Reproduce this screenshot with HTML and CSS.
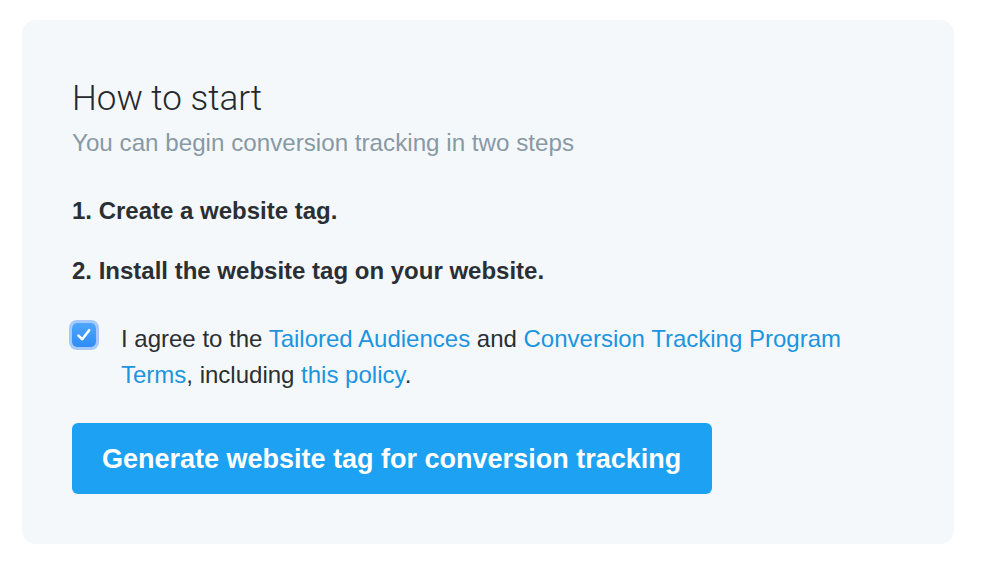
FILE: index.html
```html
<!DOCTYPE html>
<html>
<head>
<meta charset="utf-8">
<link rel="stylesheet" href="styles.css">
</head>
<body>
<div class="card">
  <h1 class="title">How to start</h1>
  <p class="subtitle">You can begin conversion tracking in two steps</p>
  <p class="step step-first">1. Create a website tag.</p>
  <p class="step">2. Install the website tag on your website.</p>
  <label class="agree">
    <span class="check">
      <svg class="check-icon" width="18" height="18" viewBox="0 0 18 18"><path d="M3.5 9.6 L7.2 13.2 L14.2 4.2" fill="none" stroke="#fff" stroke-width="2.6" stroke-linecap="round" stroke-linejoin="round"/></svg>
    </span>
    <span class="agree-text">I agree to the <a href="#">Tailored Audiences</a> and <a href="#">Conversion Tracking Program Terms</a>, including <a href="#">this policy</a>.</span>
  </label>
  <button class="btn">Generate website tag for conversion tracking</button>
</div>
</body>
</html>
```
FILE: styles.css
```css
html, body {
  margin: 0;
  padding: 0;
  background: #ffffff;
}
body {
  padding: 20px 28px 0 22px;
  font-family: "Liberation Sans", Arial, sans-serif;
  color: #292f33;
}
.card {
  background: #f5f8fa;
  border-radius: 14px;
  padding: 57px 50px 51px 50px;
  height: 524px;
  box-sizing: border-box;
  display: flex;
  flex-direction: column;
  align-items: flex-start;
}
.title {
  margin: 0;
  font-family: Roboto, "Liberation Sans", sans-serif;
  font-weight: 300;
  font-size: 35px;
  line-height: 44px;
  color: #24292d;
}
.subtitle {
  margin: 7px 0 0 0;
  font-size: 24.2px;
  line-height: 30px;
  color: #8899a6;
}
.step {
  margin: 30px 0 0 0;
  font-size: 24px;
  line-height: 30px;
  font-weight: bold;
  color: #292f33;
}
.step-first {
  margin-top: 38px;
}
.agree {
  margin-top: 35px;
  display: flex;
  align-items: flex-start;
  font-size: 24px;
  line-height: 36px;
  color: #292f33;
  width: 780px;
}
.check {
  flex: none;
  width: 24px;
  height: 24px;
  margin-top: 2px;
  border-radius: 5px;
  background: linear-gradient(#4ea6fc, #2f8cf5);
  box-shadow: 0 0 0 3px rgba(110, 170, 250, 0.6);
  display: flex;
  align-items: center;
  justify-content: center;
  margin-right: 25px;
}
.check-icon {
  display: block;
}
.agree-text a {
  color: #1b95e0;
  text-decoration: none;
}
.btn {
  margin-top: 30px;
  height: 71px;
  padding: 2px 31px 0 30px;
  border: 0;
  border-radius: 6px;
  background: #1da1f2;
  color: #ffffff;
  font-family: "Liberation Sans", Arial, sans-serif;
  font-weight: bold;
  font-size: 27px;
  line-height: 69px;
}
```
